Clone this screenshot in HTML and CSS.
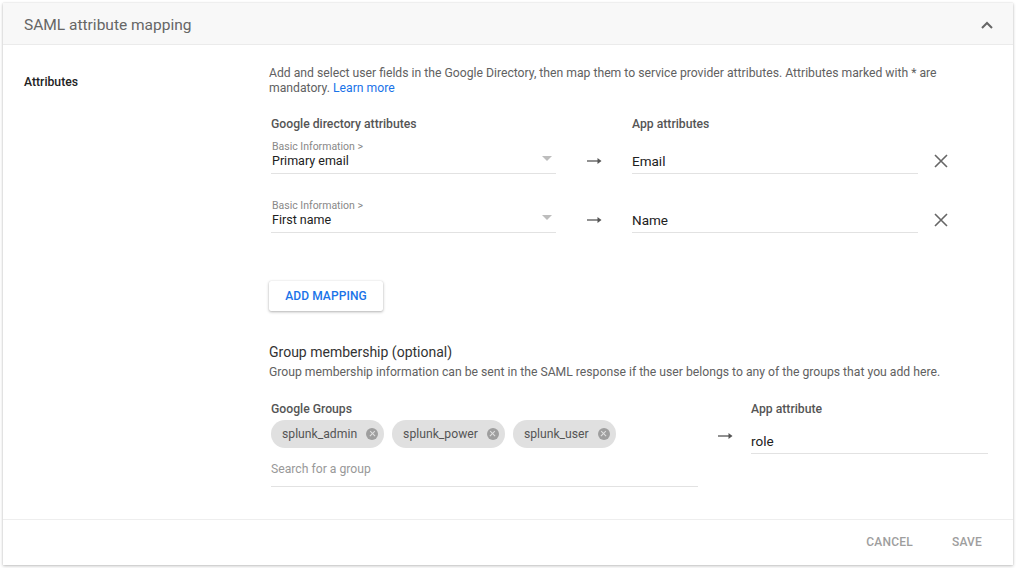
FILE: index.html
```html
<!DOCTYPE html>
<html>
<head>
<meta charset="utf-8">
<link rel="stylesheet" href="styles.css">
</head>
<body>
<div class="card">
  <div class="header">
    <span class="title">SAML attribute mapping</span>
    <svg class="chev" width="12" height="8" viewBox="0 0 12 8"><path d="M1 7 L6 2 L11 7" fill="none" stroke="#666" stroke-width="2"/></svg>
  </div>
  <div class="body">
    <div class="label">Attributes</div>
    <div class="content">
      <p class="desc">Add and select user fields in the Google Directory, then map them to service provider attributes. Attributes marked with * are mandatory. <span class="link">Learn more</span></p>

      <div class="map">
        <div class="colhead">Google directory attributes</div>
        <div></div>
        <div class="colhead">App attributes</div>
        <div></div>

        <div class="field r1">
          <div class="small">Basic Information &gt;</div>
          <div class="val-row"><span class="val">Primary email</span><span class="tri"></span></div>
        </div>
        <div class="arrow"><svg width="15" height="8" viewBox="0 0 15 8"><path d="M0 4 H12" stroke="#555" stroke-width="1.3"/><path d="M10.5 1 L14.5 4 L10.5 7 Z" fill="#555"/></svg></div>
        <div class="field app r1"><span class="val big">Email</span></div>
        <div class="close"><svg width="14" height="14" viewBox="0 0 14 14"><path d="M1 1 L13 13 M13 1 L1 13" stroke="#666" stroke-width="1.6"/></svg></div>

        <div class="field r2">
          <div class="small">Basic Information &gt;</div>
          <div class="val-row"><span class="val">First name</span><span class="tri"></span></div>
        </div>
        <div class="arrow"><svg width="15" height="8" viewBox="0 0 15 8"><path d="M0 4 H12" stroke="#555" stroke-width="1.3"/><path d="M10.5 1 L14.5 4 L10.5 7 Z" fill="#555"/></svg></div>
        <div class="field app r2"><span class="val big">Name</span></div>
        <div class="close"><svg width="14" height="14" viewBox="0 0 14 14"><path d="M1 1 L13 13 M13 1 L1 13" stroke="#666" stroke-width="1.6"/></svg></div>
      </div>

      <button class="addbtn">ADD MAPPING</button>

      <h3 class="gtitle">Group membership (optional)</h3>
      <p class="gdesc">Group membership information can be sent in the SAML response if the user belongs to any of the groups that you add here.</p>

      <div class="groups">
        <div class="gleft">
          <div class="colhead">Google Groups</div>
          <div class="chips">
            <span class="chip">splunk_admin<span class="x"></span></span>
            <span class="chip">splunk_power<span class="x"></span></span>
            <span class="chip">splunk_user<span class="x"></span></span>
          </div>
          <div class="search">Search for a group</div>
        </div>
        <div class="garrow"><svg width="15" height="8" viewBox="0 0 15 8"><path d="M0 4 H12" stroke="#555" stroke-width="1.3"/><path d="M10.5 1 L14.5 4 L10.5 7 Z" fill="#555"/></svg></div>
        <div class="gright">
          <div class="colhead">App attribute</div>
          <div class="role">role</div>
        </div>
      </div>
    </div>
  </div>
  <div class="footer">
    <span class="fbtn">CANCEL</span>
    <span class="fbtn">SAVE</span>
  </div>
</div>
</body>
</html>
```

FILE: styles.css
```css
* { box-sizing: border-box; }
html, body { margin: 0; padding: 0; background: #fff; }
body { padding: 3px; font-family: Roboto, "Liberation Sans", sans-serif; color: #212121; }

.card {
  width: 1010px;
  height: 562px;
  background: #fff;
  box-shadow: 0 1px 3px rgba(0,0,0,0.25), 0 0 1px rgba(0,0,0,0.12);
  display: flex;
  flex-direction: column;
}

.header {
  height: 42px;
  background: #f8f8f8;
  border-bottom: 1px solid #ebebeb;
  display: flex;
  align-items: center;
  justify-content: space-between;
  padding: 3px 20px 0 21px;
}
.title { font-size: 15.5px; color: #666; }
.chev { display: block; }

.body {
  flex: 1;
  display: flex;
  padding-left: 21px;
}
.label {
  width: 245px;
  font-size: 12.2px;
  font-weight: 500;
  color: #222;
  padding-top: 30px;
}
.content { flex: 1; padding-top: 21px; }

.desc {
  margin: 0;
  width: 680px;
  font-size: 12.2px;
  line-height: 15px;
  color: #616161;
}
.link { color: #1a73e8; cursor: pointer; }

.map {
  display: grid;
  grid-template-columns: 285px 76px 286px 40px;
  align-items: end;
  margin-top: 20px;
  padding-left: 2px;
}
.colhead { font-size: 12.2px; font-weight: 500; color: #555; line-height: 16px; }

.field {
  border-bottom: 1px solid #e2e2e2;
  padding-bottom: 4px;
}
.field.r1 { margin-top: 9px; }
.field.r2 { margin-top: 26px; }
.small { font-size: 10.5px; color: #888; line-height: 12px; padding-left: 1px; }
.val-row { display: flex; justify-content: space-between; align-items: center; padding-left: 1px; }
.val { font-size: 12.5px; line-height: 16px; color: #212121; }
.val.big { font-size: 13.5px; line-height: 17px; }
.field.app { padding-bottom: 3px; }
.tri {
  width: 0; height: 0;
  border-left: 5px solid transparent;
  border-right: 5px solid transparent;
  border-top: 5px solid #bdbdbd;
  margin-right: 4px;
  margin-bottom: 6px;
}
.arrow { display: flex; justify-content: center; height: 8px; margin-bottom: 9px; }
.arrow svg, .garrow svg { display: block; }
.close { height: 14px; margin-bottom: 6px; padding-left: 16px; }
.close svg { display: block; }

.addbtn {
  display: block;
  margin-top: 48px;
  width: 114px;
  height: 30px;
  border: none;
  background: #fff;
  border-radius: 2px;
  box-shadow: 0 1px 3px rgba(0,0,0,0.3), 0 0 1px rgba(0,0,0,0.15);
  color: #1a73e8;
  font-family: Roboto, "Liberation Sans", sans-serif;
  font-size: 12px;
  font-weight: 500;
  letter-spacing: 0.1px;
  padding: 0;
}

.gtitle {
  margin: 32px 0 0 0;
  font-size: 14px;
  font-weight: 400;
  color: #333;
  line-height: 18px;
}
.gdesc {
  margin: 4px 0 0 0;
  font-size: 12.2px;
  line-height: 15px;
  color: #616161;
}

.groups {
  display: flex;
  margin-top: 21px;
  padding-left: 2px;
}
.gleft { width: 427px; }
.chips { display: flex; gap: 8px; margin-top: 3px; }
.chip {
  height: 28px;
  border-radius: 14px;
  background: #e0e0e0;
  display: inline-flex;
  align-items: center;
  padding: 0 6px 0 11px;
  font-size: 12.2px;
  color: #555;
}
.x {
  width: 12px; height: 12px;
  border-radius: 50%;
  background: #9e9e9e;
  margin-left: 9px;
  position: relative;
}
.x::before, .x::after {
  content: "";
  position: absolute;
  left: 2.5px; top: 5.3px;
  width: 7px; height: 1.4px;
  background: #e0e0e0;
  transform: rotate(45deg);
}
.x::after { transform: rotate(-45deg); }
.search {
  margin-top: 13px;
  font-size: 12.2px;
  color: #999;
  line-height: 16px;
  padding-bottom: 9px;
  border-bottom: 1px solid #e2e2e2;
}
.garrow { width: 53px; padding-left: 20px; padding-top: 31px; }
.gright { width: 237px; }
.role {
  margin-top: 16px;
  font-size: 13.5px;
  line-height: 17px;
  padding-bottom: 3px;
  border-bottom: 1px solid #e2e2e2;
}

.footer {
  height: 46px;
  border-top: 1px solid #eeeeee;
  display: flex;
  justify-content: flex-end;
  align-items: center;
  gap: 39px;
  padding-right: 31px;
  padding-bottom: 2px;
}
.fbtn { font-size: 12px; font-weight: 500; color: #9e9e9e; letter-spacing: 0.2px; }
```
